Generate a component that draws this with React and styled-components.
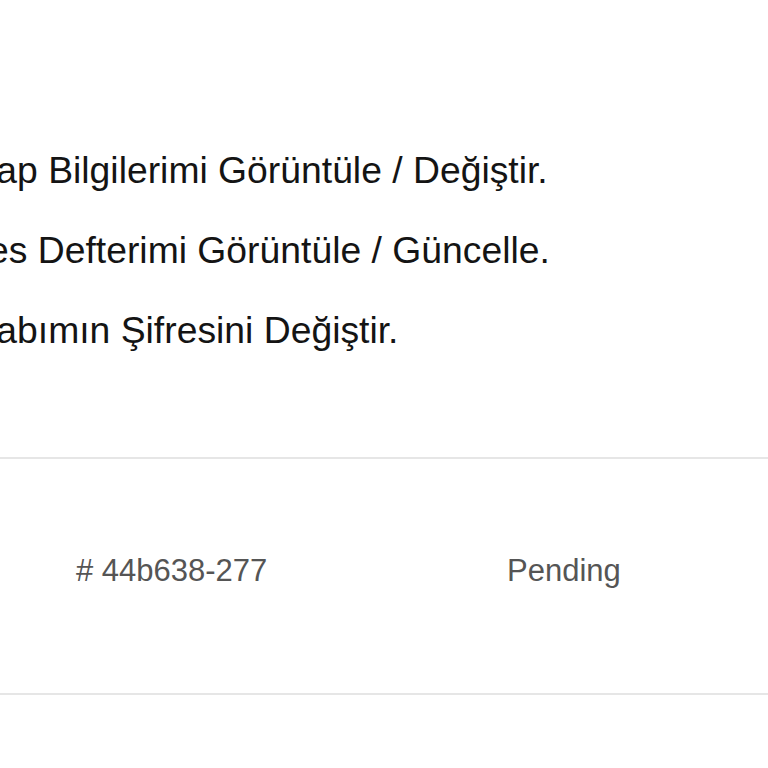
import React from "react";
import styled, { createGlobalStyle } from "styled-components";

const Global = createGlobalStyle`
  html, body { margin: 0; padding: 0; background: #ffffff; }
  body { font-family: "Liberation Sans", Arial, sans-serif; overflow: hidden; }
`;

const Viewport = styled.div`
  width: 768px;
  height: 768px;
  overflow: hidden;
  background: #fff;
`;

const Page = styled.div`
  margin-left: -70px;
  width: 1000px;
  padding-top: 130px;
`;

const LinkList = styled.ul`
  list-style: none;
  margin: 0;
  padding: 0;
`;

const LinkItem = styled.li`
  font-size: 37.3px;
  line-height: 80px;
  color: #141414;
  white-space: nowrap;
`;

const OrdersTable = styled.div`
  margin-top: 87px;
  border-top: 2px solid #e6e6e6;
  border-bottom: 2px solid #e6e6e6;
`;

const OrderRow = styled.div`
  display: grid;
  grid-template-columns: 431px 1fr;
  padding: 94px 0 104px 146px;
`;

const Cell = styled.div`
  font-size: 31px;
  line-height: 36px;
  color: #555555;
  white-space: nowrap;
`;

const links = [
  "Hesap Bilgilerimi Görüntüle / Değiştir.",
  "Adres Defterimi Görüntüle / Güncelle.",
  "Hesabımın Şifresini Değiştir.",
];

export default function App() {
  return (
    <>
      <Global />
      <Viewport>
        <Page>
          <LinkList>
            {links.map((l) => (
              <LinkItem key={l}>{l}</LinkItem>
            ))}
          </LinkList>
          <OrdersTable>
            <OrderRow>
              <Cell># 44b638-277</Cell>
              <Cell>Pending</Cell>
            </OrderRow>
          </OrdersTable>
        </Page>
      </Viewport>
    </>
  );
}
